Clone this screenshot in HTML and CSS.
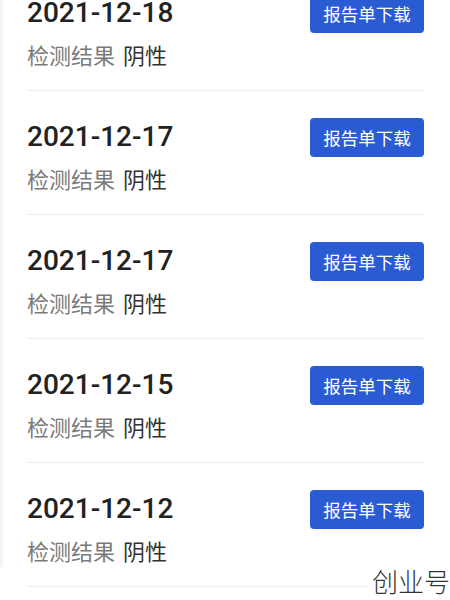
FILE: index.html
```html
<!DOCTYPE html>
<html lang="zh-CN">
  <head>
    <meta charset="UTF-8" />
    <meta name="viewport" content="width=device-width, initial-scale=1.0" />
    <title>检测报告</title>
    <link rel="stylesheet" href="styles.css">
  </head>
  <body>
    <div class="page">
      <ul class="report-list">
        <li class="report">
          <div class="info">
            <div class="date">2021-12-18</div>
            <div class="result">检测结果<span class="value">阴性</span></div>
          </div>
          <button class="download">报告单下载</button>
        </li>
        <li class="report">
          <div class="info">
            <div class="date">2021-12-17</div>
            <div class="result">检测结果<span class="value">阴性</span></div>
          </div>
          <button class="download">报告单下载</button>
        </li>
        <li class="report">
          <div class="info">
            <div class="date">2021-12-17</div>
            <div class="result">检测结果<span class="value">阴性</span></div>
          </div>
          <button class="download">报告单下载</button>
        </li>
        <li class="report">
          <div class="info">
            <div class="date">2021-12-15</div>
            <div class="result">检测结果<span class="value">阴性</span></div>
          </div>
          <button class="download">报告单下载</button>
        </li>
        <li class="report">
          <div class="info">
            <div class="date">2021-12-12</div>
            <div class="result">检测结果<span class="value">阴性</span></div>
          </div>
          <button class="download">报告单下载</button>
        </li>
      </ul>
    </div>

    <div class="watermark">创业号</div>
  </body>
</html>
```

FILE: styles.css
```css
body {
  margin: 0;
  height: 600px;
  overflow: hidden;
  background: #fff;
  font-family: Roboto, "Noto Sans CJK SC", sans-serif;
  color: #222;
}

/* list is scrolled: first row is partly above the top edge */
.page {
  height: 100%;
  border-left: 3px solid #f3f3f3;
  box-sizing: border-box;
}

.report-list {
  list-style: none;
  margin: -33px 0 0;
  padding: 0 26px 0 24px;
}

.report {
  display: flex;
  justify-content: space-between;
  align-items: flex-start;
  height: 96px;
  padding-top: 27px;
  border-bottom: 1px solid #eeeeee;
}

.info {
  padding-top: 2px;
}

.date {
  font-size: 28px;
  line-height: 34px;
  font-weight: 500;
  color: #222;
}

.result {
  margin-top: 11px;
  font-family: "Noto Sans CJK SC", sans-serif;
  font-size: 22px;
  line-height: 26px;
  color: #7a7a7a;
}

.value {
  margin-left: 8px;
  color: #333;
}

.download {
  width: 114px;
  height: 39px;
  border: none;
  border-radius: 4px;
  background-color: #2a5bd3;
  color: #fff;
  font-family: "Noto Sans CJK SC", sans-serif;
  font-size: 17.5px;
  padding: 0;
  cursor: pointer;
}

.watermark {
  position: absolute;
  right: 0;
  bottom: 3px;
  padding-left: 4px;
  background: #fff;
  font-family: "Noto Sans CJK SC", sans-serif;
  font-weight: 300;
  font-size: 26px;
  line-height: 32px;
  color: #333;
}
```
